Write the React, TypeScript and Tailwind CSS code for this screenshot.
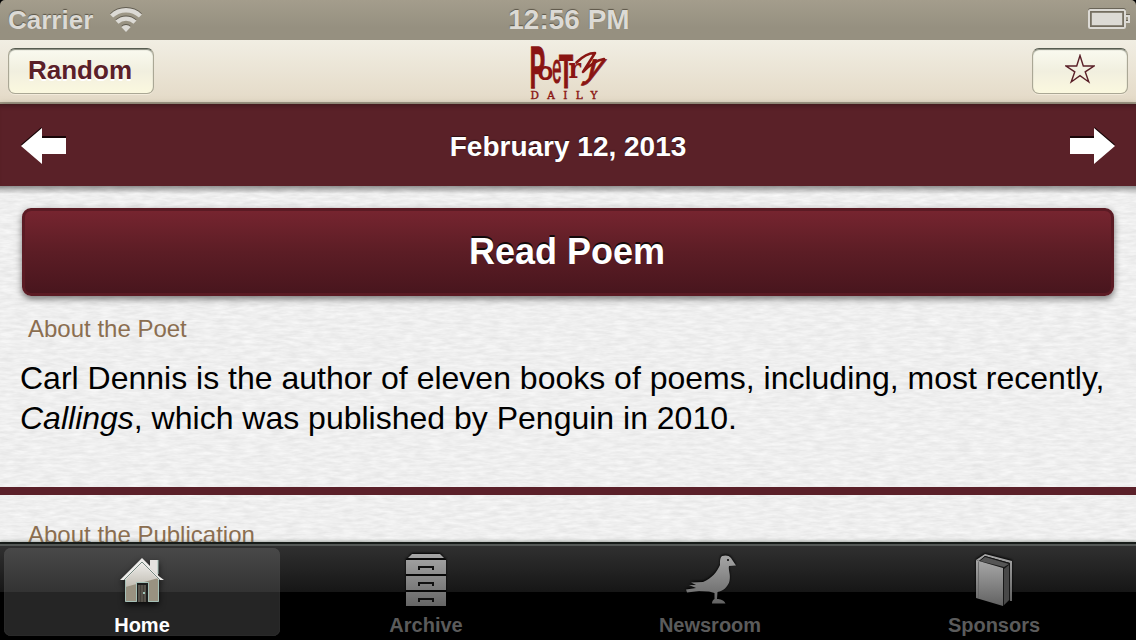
import type { ReactNode } from "react";

function PaperTexture() {
  return (
    <svg className="absolute inset-0 h-full w-full" aria-hidden="true">
      <filter id="paper" x="0" y="0" width="100%" height="100%" colorInterpolationFilters="sRGB">
        <feTurbulence type="fractalNoise" baseFrequency="0.07 0.33" numOctaves="3" seed="8" />
        <feColorMatrix values="0.1 0 0 0 0.886  0.1 0 0 0 0.886  0.1 0 0 0 0.886  0 0 0 0 1" />
      </filter>
      <rect width="100%" height="100%" filter="url(#paper)" />
    </svg>
  );
}

function WifiIcon() {
  return (
    <svg width="32" height="25" viewBox="0 0 32 25" fill="none" className="drop-shadow-[0_-1px_0_rgba(70,65,55,0.7)]">
      <path d="M1.600 8A21 21 0 0 1 30.400 8" stroke="#dcdad5" strokeWidth="4.400" />
      <path d="M7 14.200a13 13 0 0 1 18 0" stroke="#dcdad5" strokeWidth="4.400" />
      <path d="M11.300 19a6.700 6.700 0 0 1 9.400 0L16 24z" fill="#dcdad5" />
    </svg>
  );
}

function BatteryIcon() {
  return (
    <svg width="42" height="22" viewBox="0 0 42 22" fill="none" className="drop-shadow-[0_-1px_0_rgba(70,65,55,0.6)]">
      <rect x="1" y="2" width="36" height="18" rx="1.500" stroke="#dcdad5" strokeWidth="2" />
      <rect x="3" y="4" width="32" height="14" fill="#dcdad5" stroke="#777163" strokeWidth="1.600" />
      <path d="M38 8h3v6h-3" stroke="#dcdad5" strokeWidth="2" />
    </svg>
  );
}

function Logo() {
  return (
    <svg width="80" height="60" viewBox="0 0 80 60" fill="#8a1512" className="overflow-visible">
      <g fontFamily="'Liberation Sans', sans-serif" fontWeight="700">
        <text transform="translate(1.8 46) scale(.72 1.83)" fontSize="32" stroke="#8a1512" strokeWidth=".8">P</text>
        <text transform="translate(9.600 37.500)" fontSize="26">o</text>
        <text transform="translate(24.300 40.500) scale(.55 1.400)" fontSize="30" fontWeight="400" stroke="#8a1512" strokeWidth=".8">e</text>
        <text transform="translate(31 46) scale(.72 1.500)" fontSize="32" stroke="#8a1512" strokeWidth=".8">T</text>
      </g>
      <text transform="translate(40.500 35.500) scale(.88 1)" fontSize="27" fontWeight="700" fontFamily="'DejaVu Serif', serif">r</text>
      <text transform="translate(55.500 36) skewX(-27) scale(.86 1.200)" fontSize="29" fontWeight="700" fontFamily="'Liberation Sans', sans-serif" stroke="#8a1512" strokeWidth=".8">y</text>
      <path d="M48.500 20.500Q58 11 67 11L55 30Q65 19 76 17" fill="none" stroke="#8a1512" strokeWidth="2.600" strokeLinecap="round" strokeLinejoin="round" />
      <text x="2.500" y="56.500" fontSize="10.500" fontFamily="'DejaVu Serif', serif" stroke="#8a1512" strokeWidth=".4" textLength="67" lengthAdjust="spacing">DAILY</text>
    </svg>
  );
}

function Arrow({ flip = false }: { flip?: boolean }) {
  return (
    <svg width="46" height="40" viewBox="0 0 46 40" className={flip ? "-scale-x-100" : ""}>
      <path d="M0 18.500L20.500 1V10H45V20H21V34z" fill="#170507" />
      <path d="M0 20L21 2V12H45V28H21V38z" fill="#fff" />
    </svg>
  );
}

function NavButton({ children, width }: { children: ReactNode; width: string }) {
  return (
    <button
      className={`${width} flex h-[46px] items-center justify-center rounded-[7px] border border-[#aaa795] border-t-[#575c50] bg-linear-to-b from-[#fafaf0] via-[#f1efdf] to-[#fbf8df] shadow-[0_1px_0_#f3ebdb,inset_0_1px_1px_#85887b]`}
    >
      {children}
    </button>
  );
}

function HouseIcon() {
  return (
    <svg width="44" height="46" viewBox="0 0 44 46" className="drop-shadow-[0_3px_3px_rgba(0,0,0,0.7)]">
      <defs>
        <linearGradient id="house" x1="0" y1="0" x2="0" y2="1">
          <stop stopColor="#f2f1ef" />
          <stop offset="1" stopColor="#c1bdb3" />
        </linearGradient>
      </defs>
      <path d="M30 2h8v19h-8z" fill="#e4e2df" />
      <path d="M22 2L5.500 18V44H17V25H28V44H38.500V18z" fill="#999281" />
      <path d="M22 2L5.500 18V29L38.500 20V18z" fill="url(#house)" />
      <path d="M5.500 20V43.500H16.500V24.500H28.500V43.500H38.500V20M38 2V16" fill="none" stroke="#a5c0b7" />
      <path d="M0 22L22 0L30 8V10L36 16L44 22H39L22 5L5 22z" fill="#edecea" />
      <path d="M4 22L22 4L40 22" fill="none" stroke="#74877f" strokeWidth="1" />
      <path d="M17 25H28V44H17z" fill="#1d1e1d" />
      <path d="M18 27H26V44H18z" fill="#57534b" />
      <path d="M20.500 27V44M23.500 27V44" stroke="#423f39" />
      <path d="M23 34h2v2h-2z" fill="#9fc5b8" />
    </svg>
  );
}

function CabinetIcon() {
  return (
    <svg width="40" height="52" viewBox="0 0 40 52" className="drop-shadow-[0_-1px_1px_#000]">
      <defs>
        <linearGradient id="cabinet" x1="0" y1="0" x2="0" y2="52" gradientUnits="userSpaceOnUse">
          <stop stopColor="#a6a6a6" />
          <stop offset="1" stopColor="#666" />
        </linearGradient>
      </defs>
      <path d="M0 5H40V52H0z" fill="#080808" />
      <path d="M6 0H34L38 4H2zM0 6H40V20H0zM0 22H40V36H0zM0 38H40V52H0z" fill="url(#cabinet)" />
      <path d="M13 16V13H27V16M13 32V29H27V32M13 48V45H27V48" fill="none" stroke="#101010" strokeWidth="2" />
    </svg>
  );
}

function BirdIcon() {
  return (
    <svg width="50" height="49" viewBox="0 0 50 49" className="drop-shadow-[0_-1px_1px_#000]">
      <defs>
        <linearGradient id="bird" x1="0" y1="0" x2="0" y2="1">
          <stop stopColor="#a6a6a6" />
          <stop offset="1" stopColor="#636363" />
        </linearGradient>
      </defs>
      <path d="M36 1C39 0 43 0 45 3L50 10.500L43 11C42 15 45 19 43.500 26C42 32 37 36 31.500 37L31 44C34 44 38 45 39.500 48.500H26C26 46 27 45 28.500 44V38L23 36.500L13 36L1 37.500L0 34.500L10 33L3 30L10 30L5 27.500L17 27C26 23 31 17 34 10C34 5 34 3 36 1z" fill="url(#bird)" />
      <path d="M41 4h2v2h-2z" fill="#282828" />
    </svg>
  );
}

function BookIcon() {
  return (
    <svg width="36" height="52" viewBox="0 0 36 52" className="drop-shadow-[0_-1px_1px_#000]">
      <defs>
        <linearGradient id="book" x1="0" y1="0" x2="0" y2="1">
          <stop stopColor="#a8a8a8" />
          <stop offset="1" stopColor="#626262" />
        </linearGradient>
      </defs>
      <path d="M0 6L9 0L36 7V47H34V9L9 2L3 7z" fill="url(#book)" />
      <path d="M3 7L9 2L34 9V46L27 52V14z" fill="#171717" />
      <path d="M4 7L9 3L33 10L28 13z" fill="#555" />
      <path d="M28 15L33 11V46L28 51z" fill="#484848" />
      <path d="M0 6L3 7L27 14V52L0 44z" fill="url(#book)" />
      <path d="M2.500 7.500V44" stroke="#656565" strokeWidth=".8" />
    </svg>
  );
}

const tabs = [
  { label: "Home", icon: <HouseIcon />, pad: "pt-[10px]" },
  { label: "Archive", icon: <CabinetIcon />, pad: "pt-[6px]" },
  { label: "Newsroom", icon: <BirdIcon />, pad: "pt-[7px] pl-[2px]" },
  { label: "Sponsors", icon: <BookIcon />, pad: "pt-[6px]" },
];

export default function App() {
  return (
    <div className="flex h-[640px] w-[1136px] flex-col overflow-hidden bg-black font-['Liberation_Sans',Arial,sans-serif]">
      <div className="grid h-10 shrink-0 grid-cols-3 items-center rounded-t-[5px] bg-linear-to-b from-[#a49d8c] to-[#969080] to-70% pr-[6px] pl-2 font-bold text-[#dcdad5] [text-shadow:0_-1px_1px_#5b5548]">
        <div className="flex items-center gap-[17px] text-[26px] leading-10">
          Carrier
          <WifiIcon />
        </div>
        <div className="pb-px text-center text-[28px] leading-[39px]">12:56 PM</div>
        <div className="flex justify-end pb-[2px]"><BatteryIcon /></div>
      </div>

      <header className="grid h-16 shrink-0 grid-cols-3 items-start border-b-2 border-[#a39b87] bg-linear-to-b from-[#f1eee3] to-[#e4dac7] px-2">
        <div className="pt-2">
          <NavButton width="w-[146px]">
            <span className="pr-[2px] pb-[3px] text-[26px] leading-8 font-bold text-[#5a2028] [text-shadow:0_2px_0_#fff]">Random</span>
          </NavButton>
        </div>
        <div className="flex justify-center pt-[2px]"><Logo /></div>
        <div className="flex justify-end pt-2">
          <NavButton width="w-24">
            <svg width="30" height="30" viewBox="0 0 30 30" fill="none" className="mb-[5px]">
              <path d="M15 1.500L18.300 12H29L20.200 17.800L23.800 28L15 21.700L6.200 28L9.800 17.800L1 12H11.700z" stroke="#5a2028" strokeWidth="1.400" />
            </svg>
          </NavButton>
        </div>
      </header>

      <div className="relative flex h-[82px] shrink-0 items-center justify-between bg-[#5a2128] px-[21px] pt-[2px] shadow-[0_2px_7px_rgba(0,0,0,0.5),inset_0_5px_4px_-3px_#421a1d]">
        <Arrow />
        <h1 className="pt-[2px] text-[28px] leading-8 font-bold text-white [text-shadow:0_-1px_1px_#281013]">February 12, 2013</h1>
        <Arrow flip />
      </div>

      <main className="relative -mt-[82px] h-[438px] shrink-0 overflow-hidden pt-[82px] [clip-path:inset(82px_0_0_0)]">
        <PaperTexture />
        <div className="pointer-events-none absolute inset-x-0 top-[82px] h-2 bg-linear-to-b from-black/40 to-transparent" />
        <div className="relative flex flex-col">
          <button className="mx-[22px] mt-[22px] h-22 rounded-[9px] border-[3px] border-[#5b1b24] bg-linear-to-b from-[#782530] via-[#5c1d25] to-[#47151d] bg-origin-border pr-[2px] text-[36px] leading-none font-bold text-white shadow-[0_3px_7px_rgba(0,0,0,0.5)] [text-shadow:0_-2px_0_#12090a]">
            Read Poem
          </button>
          <section className="h-[191px] pt-[15px]">
            <h2 className="pl-7 text-2xl leading-9 text-[#8b6e50]">About the Poet</h2>
            <p className="mt-[11px] pl-5 text-[32px] leading-10 whitespace-nowrap text-black">
              Carl Dennis is the author of eleven books of poems, including, most recently,
              <br />
              <em>Callings</em>, which was published by Penguin in 2010.
            </p>
          </section>
          <div className="h-2 bg-[#5b2029]" />
          <h2 className="mt-[22px] pl-7 text-2xl leading-9 text-[#8b6e50]">About the Publication</h2>
        </div>
      </main>

      <nav className="relative grid h-[98px] shrink-0 grid-cols-4 border-t-2 border-[#171c19] bg-[linear-gradient(to_bottom,#545856_0,#545856_2px,#303030_2px,#161616_48px,#000_48px)] shadow-[0_-1px_3px_rgba(90,100,90,0.5)]">
        {tabs.map(({ label, icon, pad }, i) => (
          <div key={label} className="p-1">
            <button
              className={`${i === 0 ? "bg-[linear-gradient(to_bottom,#494949_0,#333_44px,#252525_44px)] text-white shadow-[inset_0_0_1px_#555]" : "text-[#5b5b5b]"} flex h-[88px] w-full flex-col items-center rounded-[7px]`}
            >
              <span className={`${pad} flex h-[66px] items-start`}>{icon}</span>
              <span className="text-xl leading-[22px] font-bold">{label}</span>
            </button>
          </div>
        ))}
      </nav>
    </div>
  );
}
